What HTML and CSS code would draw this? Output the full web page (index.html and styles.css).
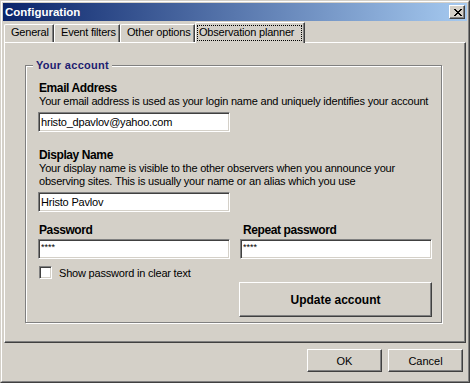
FILE: index.html
```html
<!DOCTYPE html>
<html>
<head>
<meta charset="utf-8">
<title>Configuration</title>
<link rel="stylesheet" href="styles.css">
</head>
<body>
<div class="window">
  <div class="frame">
    <div class="titlebar">
      <span class="title">Configuration</span>
      <span class="close"><svg width="8" height="7" viewBox="0 0 8 7" shape-rendering="crispEdges"><path d="M0 0h2v1H0z M6 0h2v1H6z M1 1h2v1H1z M5 1h2v1H5z M2 2h4v1H2z M3 3h2v1H3z M2 4h4v1H2z M1 5h2v1H1z M5 5h2v1H5z M0 6h2v1H0z M6 6h2v1H6z" fill="#000"/></svg></span>
    </div>
    <div class="client">
      <div class="tabs">
        <div class="tab tab-general">General</div>
        <div class="tab tab-events">Event filters</div>
        <div class="tab tab-other">Other options</div>
        <div class="tab tab-active"><span class="focus">Observation planner</span></div>
      </div>
      <div class="panel">
        <div class="group">
          <div class="legend">Your account</div>
          <div class="label label-first">Email Address</div>
          <div class="desc">Your email address is used as your login name and uniquely identifies your account</div>
          <input class="field" type="text" value="hristo_dpavlov@yahoo.com">
          <div class="label label-section">Display Name</div>
          <div class="desc">Your display name is visible to the other observers when you announce your observing sites. This is usually your name or an alias which you use</div>
          <input class="field" type="text" value="Hristo Pavlov">
          <div class="pw-grid">
            <div class="label">Password</div>
            <div class="label label-repeat">Repeat password</div>
            <input class="field pw" type="text" value="****">
            <input class="field pw" type="text" value="****">
            <label class="check"><span class="box"></span><span>Show password in clear text</span></label>
            <button class="btn btn-update">Update account</button>
          </div>
        </div>
      </div>
      <div class="footer">
        <button class="btn btn-dlg">OK</button>
        <button class="btn btn-dlg">Cancel</button>
      </div>
    </div>
  </div>
</div>
</body>
</html>
```

FILE: styles.css
```css
* { box-sizing: border-box; }
html, body { margin: 0; padding: 0; background: #d4d0c8; }
body {
  font-family: "Liberation Sans", Arial, sans-serif;
  font-size: 11px;
  letter-spacing: -0.2px;
  color: #000;
  width: 470px;
  height: 383px;
  overflow: hidden;
}
.window {
  width: 470px;
  height: 383px;
  border: 1px solid;
  border-color: #d4d0c8 #404040 #404040 #d4d0c8;
  background: #d4d0c8;
}
.frame {
  height: 100%;
  border: 1px solid;
  border-color: #fff #808080 #808080 #fff;
  padding: 1px;
  display: flex;
  flex-direction: column;
}
.titlebar {
  height: 18px;
  flex: 0 0 18px;
  background: linear-gradient(to right, #0a246a, #a6caf0);
  display: flex;
  align-items: center;
  justify-content: space-between;
  padding: 0 2px 0 2px;
}
.title {
  color: #fff;
  font-weight: bold;
  font-size: 11.5px;
  letter-spacing: 0;
  line-height: 13px;
}
.close {
  width: 16px;
  height: 14px;
  background: #d4d0c8;
  border: 1px solid;
  border-color: #fff #404040 #404040 #fff;
  box-shadow: inset -1px -1px #808080;
  display: flex;
  align-items: center;
  justify-content: center;
  padding-left: 1px;
}
.close svg { display: block; }
.client {
  flex: 1;
  padding: 1px 1px 0 1px;
  display: flex;
  flex-direction: column;
}
.tabs {
  display: flex;
  align-items: flex-end;
  height: 20px;
  flex: 0 0 20px;
  position: relative;
  z-index: 1;
}
.tab {
  height: 18px;
  border-top: 1px solid #fff;
  border-left: 1px solid #fff;
  border-right: 1px solid #404040;
  border-top-left-radius: 2px;
  border-top-right-radius: 1px;
  box-shadow: inset -1px 0 #808080;
  padding-left: 6px;
  line-height: 15px;
  white-space: nowrap;
  background: #d4d0c8;
}
.tab-general { width: 50px; }
.tab-events { width: 66px; }
.tab-other { width: 75px; }
.tab-active {
  width: 110px;
  height: 21px;
  margin-bottom: -1px;
  padding: 2px 0 0 1px;
  line-height: 13px;
}
.focus {
  display: block;
  width: 105px;
  height: 16px;
  outline: 1px dotted #000;
  outline-offset: -1px;
  padding: 1px 0 0 2px;
}
.panel {
  flex: 0 0 301px;
  border: 1px solid;
  border-color: #fff #404040 #404040 #fff;
  box-shadow: inset -1px -1px #808080;
  padding: 22px 0 0 20px;
}
.group {
  width: 417px;
  height: 258px;
  border: 1px solid #808080;
  box-shadow: inset 1px 1px #fff, 1px 1px #fff;
  display: flex;
  flex-direction: column;
  align-items: flex-start;
  padding-left: 12px;
}
.legend {
  margin: -7px 0 0 -5px;
  padding: 0 3px;
  background: #d4d0c8;
  color: #1c1c70;
  font-weight: bold;
  letter-spacing: 0.3px;
  line-height: 13px;
}
.label {
  font-weight: bold;
  font-size: 12px;
  letter-spacing: -0.4px;
  line-height: 14px;
  padding-left: 1px;
}
.label-first { margin-top: 9px; }
.label-section { margin-top: 16px; }
.desc {
  line-height: 13px;
  padding-left: 1px;
  width: 400px;
}
.field {
  width: 192px;
  height: 20px;
  margin: 4px 0 0 0;
  border: 1px solid;
  border-color: #808080 #fff #fff #808080;
  box-shadow: inset 1px 1px #404040, inset -1px -1px #d4d0c8;
  background: #fff;
  font-family: "Liberation Sans", Arial, sans-serif;
  font-size: 11px;
  letter-spacing: -0.2px;
  color: #000;
  padding: 0 0 0 2px;
  outline: none;
}
.pw-grid {
  display: grid;
  grid-template-columns: 192px 192px;
  column-gap: 10px;
  margin-top: 11px;
}
.label-repeat { padding-left: 3px; }
.pw {
  margin-top: 2px;
  font-size: 9px;
  letter-spacing: 0;
  padding-bottom: 5px;
}
.check {
  grid-column: 1;
  grid-row: 3;
  display: flex;
  align-items: center;
  gap: 7px;
  margin-top: 7px;
  padding-left: 1px;
  height: 13px;
}
.box {
  width: 13px;
  height: 13px;
  border: 1px solid;
  border-color: #808080 #fff #fff #808080;
  box-shadow: inset 1px 1px #404040, inset -1px -1px #d4d0c8;
  background: #fff;
}
.btn {
  font-family: "Liberation Sans", Arial, sans-serif;
  font-size: 11px;
  color: #000;
  background: #d4d0c8;
  border: 1px solid;
  border-color: #fff #404040 #404040 #fff;
  box-shadow: inset -1px -1px #808080;
  padding: 0;
}
.btn-update {
  grid-column: 2;
  grid-row: 4;
  width: 193px;
  height: 35px;
  margin: 3px 0 0 -1px;
  font-weight: bold;
  font-size: 12px;
  letter-spacing: 0;
}
.footer {
  display: flex;
  justify-content: flex-end;
  gap: 6px;
  margin-top: 6px;
  padding-right: 3px;
}
.btn-dlg {
  width: 75px;
  height: 23px;
}
```
